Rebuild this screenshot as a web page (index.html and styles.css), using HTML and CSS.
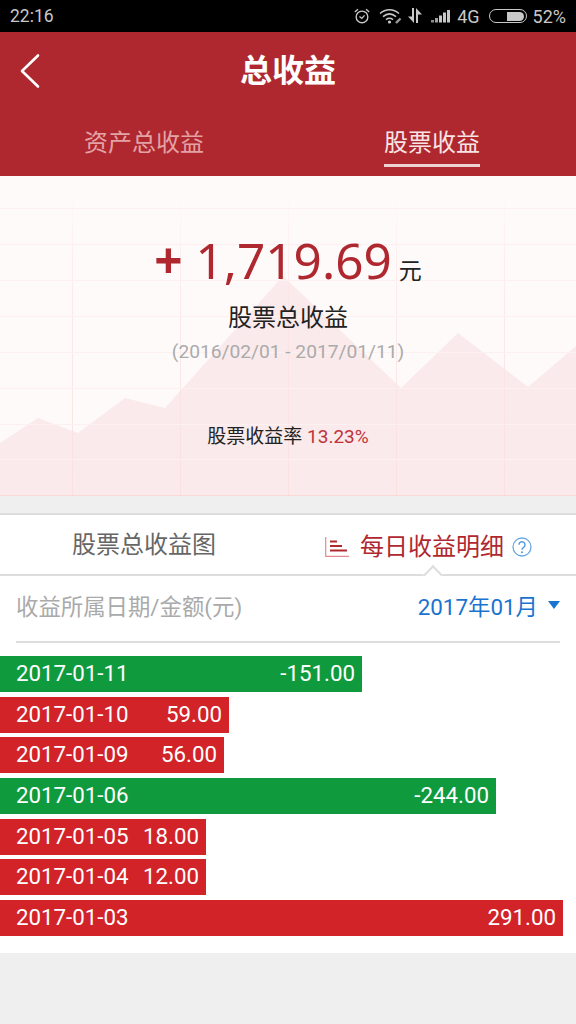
FILE: index.html
```html
<!DOCTYPE html>
<html lang="zh-CN">
<head>
<meta charset="utf-8">
<title>总收益</title>
<link rel="stylesheet" href="styles.css">
</head>
<body>
<div class="page">
  <div class="status">
    <span class="time">22:16</span>
    <div class="status-right">
      <svg class="ic-alarm" width="18" height="18" viewBox="0 0 20 20" fill="none" stroke="#c8c8c8" stroke-width="1.500"><circle cx="10" cy="11" r="6.500"/><path d="M7.200 10.500l2.600 2.200 3-3.400M2 5.500L5.500 2.400M18 5.500L14.500 2.400"/></svg>
      <svg class="ic-wifi" width="24" height="18" viewBox="0 0 24 18" fill="none" stroke="#c8c8c8" stroke-width="1.600"><path d="M1 6.500C6.500 1.500 14.500 1.500 20 6.500M4 9.700C8 6.300 13 6.300 17 9.700M7 12.600C9 11.100 12 11.100 14 12.600"/><circle cx="10.500" cy="15" r="1.600" fill="#c8c8c8" stroke="none"/><path d="M17 16l4.500-4.500" stroke-width="2.400" stroke="#9a9a9a"/></svg>
      <svg class="ic-data" width="16" height="18" viewBox="0 0 16 18" fill="#c8c8c8"><path d="M5 1h2v15L1 9.500h4zM9 16V1l6 6.500h-4V16z"/></svg>
      <svg class="ic-signal" width="20" height="14" viewBox="0 0 20 14" fill="#c8c8c8"><rect x="0" y="11" width="3" height="2.500" opacity=".7"/><rect x="4" y="9" width="3" height="4.500" opacity=".8"/><rect x="8" y="6.500" width="3" height="7"/><rect x="12" y="3.500" width="3" height="10"/><rect x="16" y="1" width="3" height="12.500"/></svg>
      <span class="net">4G</span>
      <div class="batt"><div class="batt-fill"></div></div>
      <span class="pct">52%</span>
    </div>
  </div>

  <header class="topbar">
    <div class="title-row">
      <svg class="back" width="22" height="36" viewBox="0 0 22 36" fill="none" stroke="#fff" stroke-width="2.600" stroke-linecap="round" stroke-linejoin="round"><path d="M19 2.500L3 18l16 15.500"/></svg>
      <h1 class="title">总收益</h1>
    </div>
    <nav class="tabs">
      <div class="tab">资产总收益</div>
      <div class="tab tab-on"><span class="tab-label">股票收益</span></div>
    </nav>
  </header>

  <section class="hero">
    <svg class="hero-bg" width="576" height="319" viewBox="0 0 576 319" preserveAspectRatio="none">
      <defs>
        <linearGradient id="fade" gradientUnits="userSpaceOnUse" x1="0" y1="15" x2="0" y2="319">
          <stop offset="0" stop-color="#fbe4e4" stop-opacity="0"/>
          <stop offset=".25" stop-color="#fbe4e4" stop-opacity=".6"/>
          <stop offset="1" stop-color="#fbe0e0"/>
        </linearGradient>
      </defs>
      <path class="area" d="M0 267L38 242L78 257L125 222L165 232L283 100L401 212L458 157L528 211L576 170V319H0Z"/>
      <path stroke="url(#fade)" fill="none" d="M72.500 15V319M180.500 15V319M288.500 15V319M396.500 15V319M504.500 15V319"/>
      <path class="hgrid" fill="none" d="M0 32.500H576M0 68.500H576M0 104.500H576M0 140.500H576M0 176.500H576M0 212.500H576M0 248.500H576M0 283.500H576"/>
    </svg>
    <div class="hero-body">
      <div class="amount"><span class="amount-num"><span class="plus">+</span> 1,719.69</span><span class="amount-unit">元</span></div>
      <div class="hero-label">股票总收益</div>
      <div class="hero-range">(2016/02/01 - 2017/01/11)</div>
      <div class="hero-rate">股票收益率 <span class="rate-num">13.23%</span></div>
    </div>
  </section>

  <section class="panel">
    <div class="switch">
      <div class="switch-a">股票总收益图</div>
      <div class="switch-b">
        <svg class="ic-bars" width="24" height="20" viewBox="0 0 24 20" fill="none"><path d="M.7 0V19.300H24" stroke="#e58a8e" stroke-width="1.200"/><path d="M5 4.500h7M5 9h12M5 13.500h17" stroke="#b0282f" stroke-width="1.800"/></svg>
        <span class="switch-label">每日收益明细</span>
        <svg class="ic-help" width="20" height="20" viewBox="0 0 20 20" fill="none"><circle cx="10" cy="10" r="9" stroke="#6aa8e4" stroke-width="1.300"/><path d="M7 7.800a3 3 0 1 1 4.600 2.500C10.500 11 10 11.500 10 12.800" stroke="#4f97de" stroke-width="1.400"/><circle cx="10" cy="15.200" r="1" fill="#4f97de"/></svg>
        <span class="caret"></span>
      </div>
    </div>
    <div class="list-head">
      <span class="list-title">收益所属日期/金额(元)</span>
      <span class="month">2017年01月<span class="tri"></span></span>
    </div>
    <div class="bars">
      <div class="bar down" style="width:362px"><span>2017-01-11</span><span>-151.00</span></div>
      <div class="bar up" style="width:229px"><span>2017-01-10</span><span>59.00</span></div>
      <div class="bar up" style="width:224px"><span>2017-01-09</span><span>56.00</span></div>
      <div class="bar down" style="width:496px"><span>2017-01-06</span><span>-244.00</span></div>
      <div class="bar up" style="width:206px"><span>2017-01-05</span><span>18.00</span></div>
      <div class="bar up" style="width:206px"><span>2017-01-04</span><span>12.00</span></div>
      <div class="bar up" style="width:563px"><span>2017-01-03</span><span>291.00</span></div>
    </div>
  </section>
</div>
</body>
</html>
```
FILE: styles.css
```css
* { box-sizing: border-box; }
html, body { margin: 0; padding: 0; }
body {
  width: 576px;
  height: 1024px;
  overflow: hidden;
  background: #efefef;
  font-family: Roboto, "Noto Sans CJK SC", sans-serif;
}
.page { display: flex; flex-direction: column; width: 576px; }

.status {
  height: 32px;
  background: #000;
  color: #c8c8c8;
  display: flex;
  align-items: center;
  justify-content: space-between;
  padding: 0 10px;
  font-size: 17.500px;
}
.status-right { display: flex; align-items: center; }
.ic-alarm { margin-right: 8px; }
.ic-wifi { margin-right: 4px; }
.ic-data { margin-right: 8px; }
.ic-signal { margin-right: 6px; }
.net { font-size: 18px; margin-right: 9px; }
.pct { font-size: 18px; }
.batt {
  width: 38px;
  height: 14px;
  border: 1.500px solid #c8c8c8;
  border-radius: 7px;
  padding: 1.500px;
  margin-right: 6px;
  display: flex;
  justify-content: flex-end;
}
.batt-fill { width: 17px; background: #c8c8c8; border-radius: 0 5px 5px 0; }

.topbar { background: #b0282f; height: 144px; }
.title-row {
  height: 78px;
  display: flex;
  align-items: center;
  justify-content: center;
  position: relative;
}
.back { position: absolute; left: 19px; top: 21px; }
.title { margin: 0; font-size: 32px; font-weight: 700; color: #fff; line-height: 78px; }
.tabs { display: flex; height: 66px; }
.tab {
  flex: 1;
  display: flex;
  justify-content: center;
  color: #e3a3a6;
  font-size: 24px;
  line-height: 34px;
  padding-top: 16px;
}
.tab-on { color: #f7e5e5; }
.tab-label { display: block; height: 41px; border-bottom: 3px solid #eed2d3; padding: 0; }

.hero {
  height: 320px;
  position: relative;
  background: #fffafa;
  border-bottom: 1px solid #fbd9d9;
}
.hero-bg { position: absolute; left: 0; top: 0; }
.area { fill: #faeaeb; }
.hgrid { stroke: #fdf0f0; }
.hero-body {
  position: relative;
  display: flex;
  flex-direction: column;
  align-items: center;
  padding-top: 49px;
}
.amount { display: flex; align-items: baseline; height: 71px; line-height: 70px; }
.amount-num { font-family: "Noto Sans", sans-serif; font-size: 49.500px; color: #b0282f; }
.plus { font-weight: 700; }
.amount-unit { font-size: 23px; color: #222; margin-left: 7px; }
.hero-label { font-size: 24px; color: #222; line-height: 34px; margin-top: 5px; }
.hero-range { font-size: 19.200px; color: #aaa; line-height: 28px; margin-top: 3px; }
.hero-rate { font-size: 19px; color: #222; line-height: 28px; margin-top: 57px; }
.rate-num { font-size: 19px; color: #c0323a; }

.panel {
  margin-top: 17px;
  background: #fff;
  height: 440px;
  border-top: 2px solid #ddd;
}
.switch {
  height: 61px;
  display: flex;
  border-bottom: 2px solid #ddd;
  position: relative;
}
.switch-a {
  width: 288px;
  text-align: center;
  font-size: 24px;
  line-height: 60px;
  color: #666;
}
.switch-b { display: flex; align-items: center; padding-left: 37px; color: #b0282f; font-size: 24px; height: 58px; }
.ic-bars { margin-right: 11px; margin-top: 6px; }
.ic-help { margin-left: 8px; margin-top: 5px; }
.caret {
  position: absolute;
  left: 426px;
  bottom: -8px;
  width: 14px;
  height: 14px;
  background: #fff;
  border-top: 2px solid #ddd;
  border-left: 2px solid #ddd;
  transform: rotate(45deg);
}
.list-head {
  margin: 0 16px;
  height: 67px;
  border-bottom: 2px solid #ddd;
  display: flex;
  align-items: center;
  justify-content: space-between;
  padding-bottom: 8px;
}
.list-title { font-size: 22.400px; color: #aaa; }
.month { font-size: 22.400px; color: #1a73cf; display: flex; align-items: center; }
.tri {
  width: 0;
  height: 0;
  margin-left: 10px;
  border-left: 6px solid transparent;
  border-right: 6px solid transparent;
  border-top: 8px solid #1a73cf;
}
.bars { display: flex; flex-direction: column; gap: 4.670px; padding-top: 13px; }
.bar {
  height: 36px;
  display: flex;
  justify-content: space-between;
  align-items: center;
  padding: 0 7px 2px 16px;
  color: #fff;
  font-size: 22.300px;
}
.up { background: #d22329; }
.down { background: #0f9b3d; }
```
